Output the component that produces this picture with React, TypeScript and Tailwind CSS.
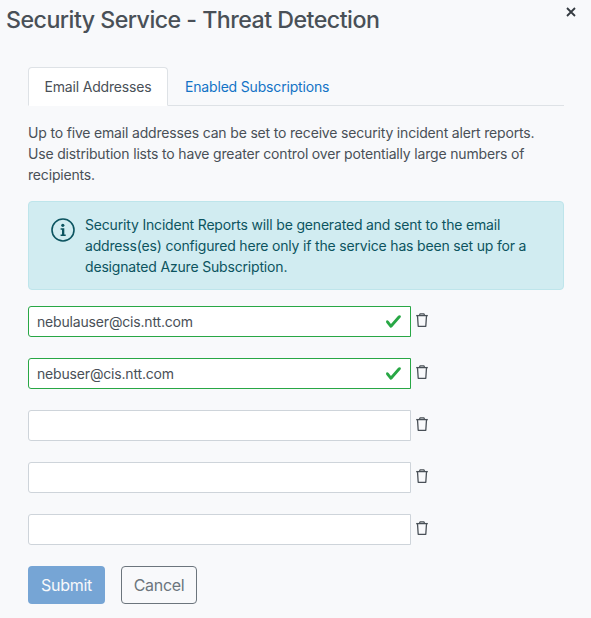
import { useState } from "react";

const initialEmails = ["nebulauser@cis.ntt.com", "nebuser@cis.ntt.com", "", "", ""];

function InfoIcon() {
  return (
    <svg className="w-6 h-6 shrink-0" viewBox="0 0 24 24" fill="none">
      <circle cx="12" cy="12" r="11" stroke="currentColor" strokeWidth="1.6" />
      <circle cx="11.8" cy="7.3" r="1.6" fill="currentColor" />
      <path d="M9.6 10.2h3.7v6.3h1.4v1.5H9.6v-1.5h1.4v-4.8H9.6z" fill="currentColor" />
    </svg>
  );
}

function TrashIcon() {
  return (
    <svg className="w-3 h-[14px]" viewBox="0 0 12 14" fill="none" stroke="currentColor">
      <path d="M0.2 2.6h11.6" strokeWidth="1.3" />
      <path d="M3.4 2.4l0.7-1.6h3.8l0.7 1.6" strokeWidth="1.2" strokeLinejoin="round" />
      <path d="M1.5 2.8l0.7 10.5h7.6l0.7-10.5" strokeWidth="1.3" strokeLinejoin="round" />
    </svg>
  );
}

function CheckIcon() {
  return (
    <svg className="absolute right-[9px] top-[7px] w-[17px] h-[17px] pointer-events-none" viewBox="0 0 8 8">
      <path
        fill="#28a745"
        d="M2.3 6.73L.6 4.53c-.4-1.04.46-1.4 1.1-.8l1.1 1.4 3.4-3.8c.6-.63 1.6-.27 1.2.7l-4 4.6c-.43.5-.8.4-1.1.1z"
      />
    </svg>
  );
}

export default function App() {
  const [emails, setEmails] = useState(initialEmails);

  const update = (index: number, value: string) => {
    setEmails(emails.map((email, i) => (i === index ? value : email)));
  };

  return (
    <div className="min-h-screen bg-[#f8f9fb] font-['Inter',sans-serif] text-sm leading-[21px] tracking-[-0.175px] text-[#495057]">
      <header className="flex items-start justify-between pl-[6px] pr-[14px] pt-[5px]">
        <h1 className="text-[23.2px] leading-[30px] font-medium tracking-[-0.52px]">Security Service - Threat Detection</h1>
        <button type="button" aria-label="Close" className="mt-px p-px text-[#343a40]">
          <svg className="w-[10px] h-[10px]" viewBox="0 0 10 10" stroke="currentColor" strokeWidth="1.8">
            <path d="M1 1l8 8M9 1l-8 8" />
          </svg>
        </button>
      </header>

      <main className="pl-7 pr-[27px] pt-8">
        <nav className="flex border-b border-[#dee2e6]">
          <button type="button" className="-mb-px h-[39px] w-[140px] rounded-t border border-[#dee2e6] border-b-white bg-white">
            Email Addresses
          </button>
          <button type="button" className="px-[17px] text-[#1373c6]">Enabled Subscriptions</button>
        </nav>

        <p className="mt-4 pr-4">
          Up to five email addresses can be set to receive security incident alert reports. Use distribution lists to have
          greater control over potentially large numbers of recipients.
        </p>

        <div className="mt-4 flex h-[89px] rounded border border-[#bee5eb] bg-[#d1ecf1] pl-[22px] pr-7 pt-[12px] text-[#0c5460]">
          <div className="mr-[10px] mt-1">
            <InfoIcon />
          </div>
          <p>
            Security Incident Reports will be generated and sent to the email address(es) configured here only if the
            service has been set up for a designated Azure Subscription.
          </p>
        </div>

        <form className="mt-4" onSubmit={(e) => e.preventDefault()}>
          <div className="space-y-[21px]">
            {emails.map((email, i) => (
              <div key={i} className="flex">
                <div className="relative w-[383px]">
                  <input
                    value={email}
                    onChange={(e) => update(i, e.target.value)}
                    className={`block h-[31px] w-full rounded-l-[3px] border bg-white px-2 outline-none ${email ? "border-[#28a745]" : "border-[#ced4da]"}`}
                  />
                  {email && <CheckIcon />}
                </div>
                <button type="button" aria-label="Delete" className="ml-[5px] mt-[7px] self-start" onClick={() => update(i, "")}>
                  <TrashIcon />
                </button>
              </div>
            ))}
          </div>

          <div className="mt-[21px] flex gap-4 text-base tracking-[-0.3px]">
            <button type="submit" className="h-[38px] w-[77px] rounded bg-[#76a5d5] text-[#f8f9fb]">
              Submit
            </button>
            <button type="button" className="h-[38px] w-[76px] rounded border border-[#6c757d] text-[#6c757d]">
              Cancel
            </button>
          </div>
        </form>
      </main>
    </div>
  );
}
